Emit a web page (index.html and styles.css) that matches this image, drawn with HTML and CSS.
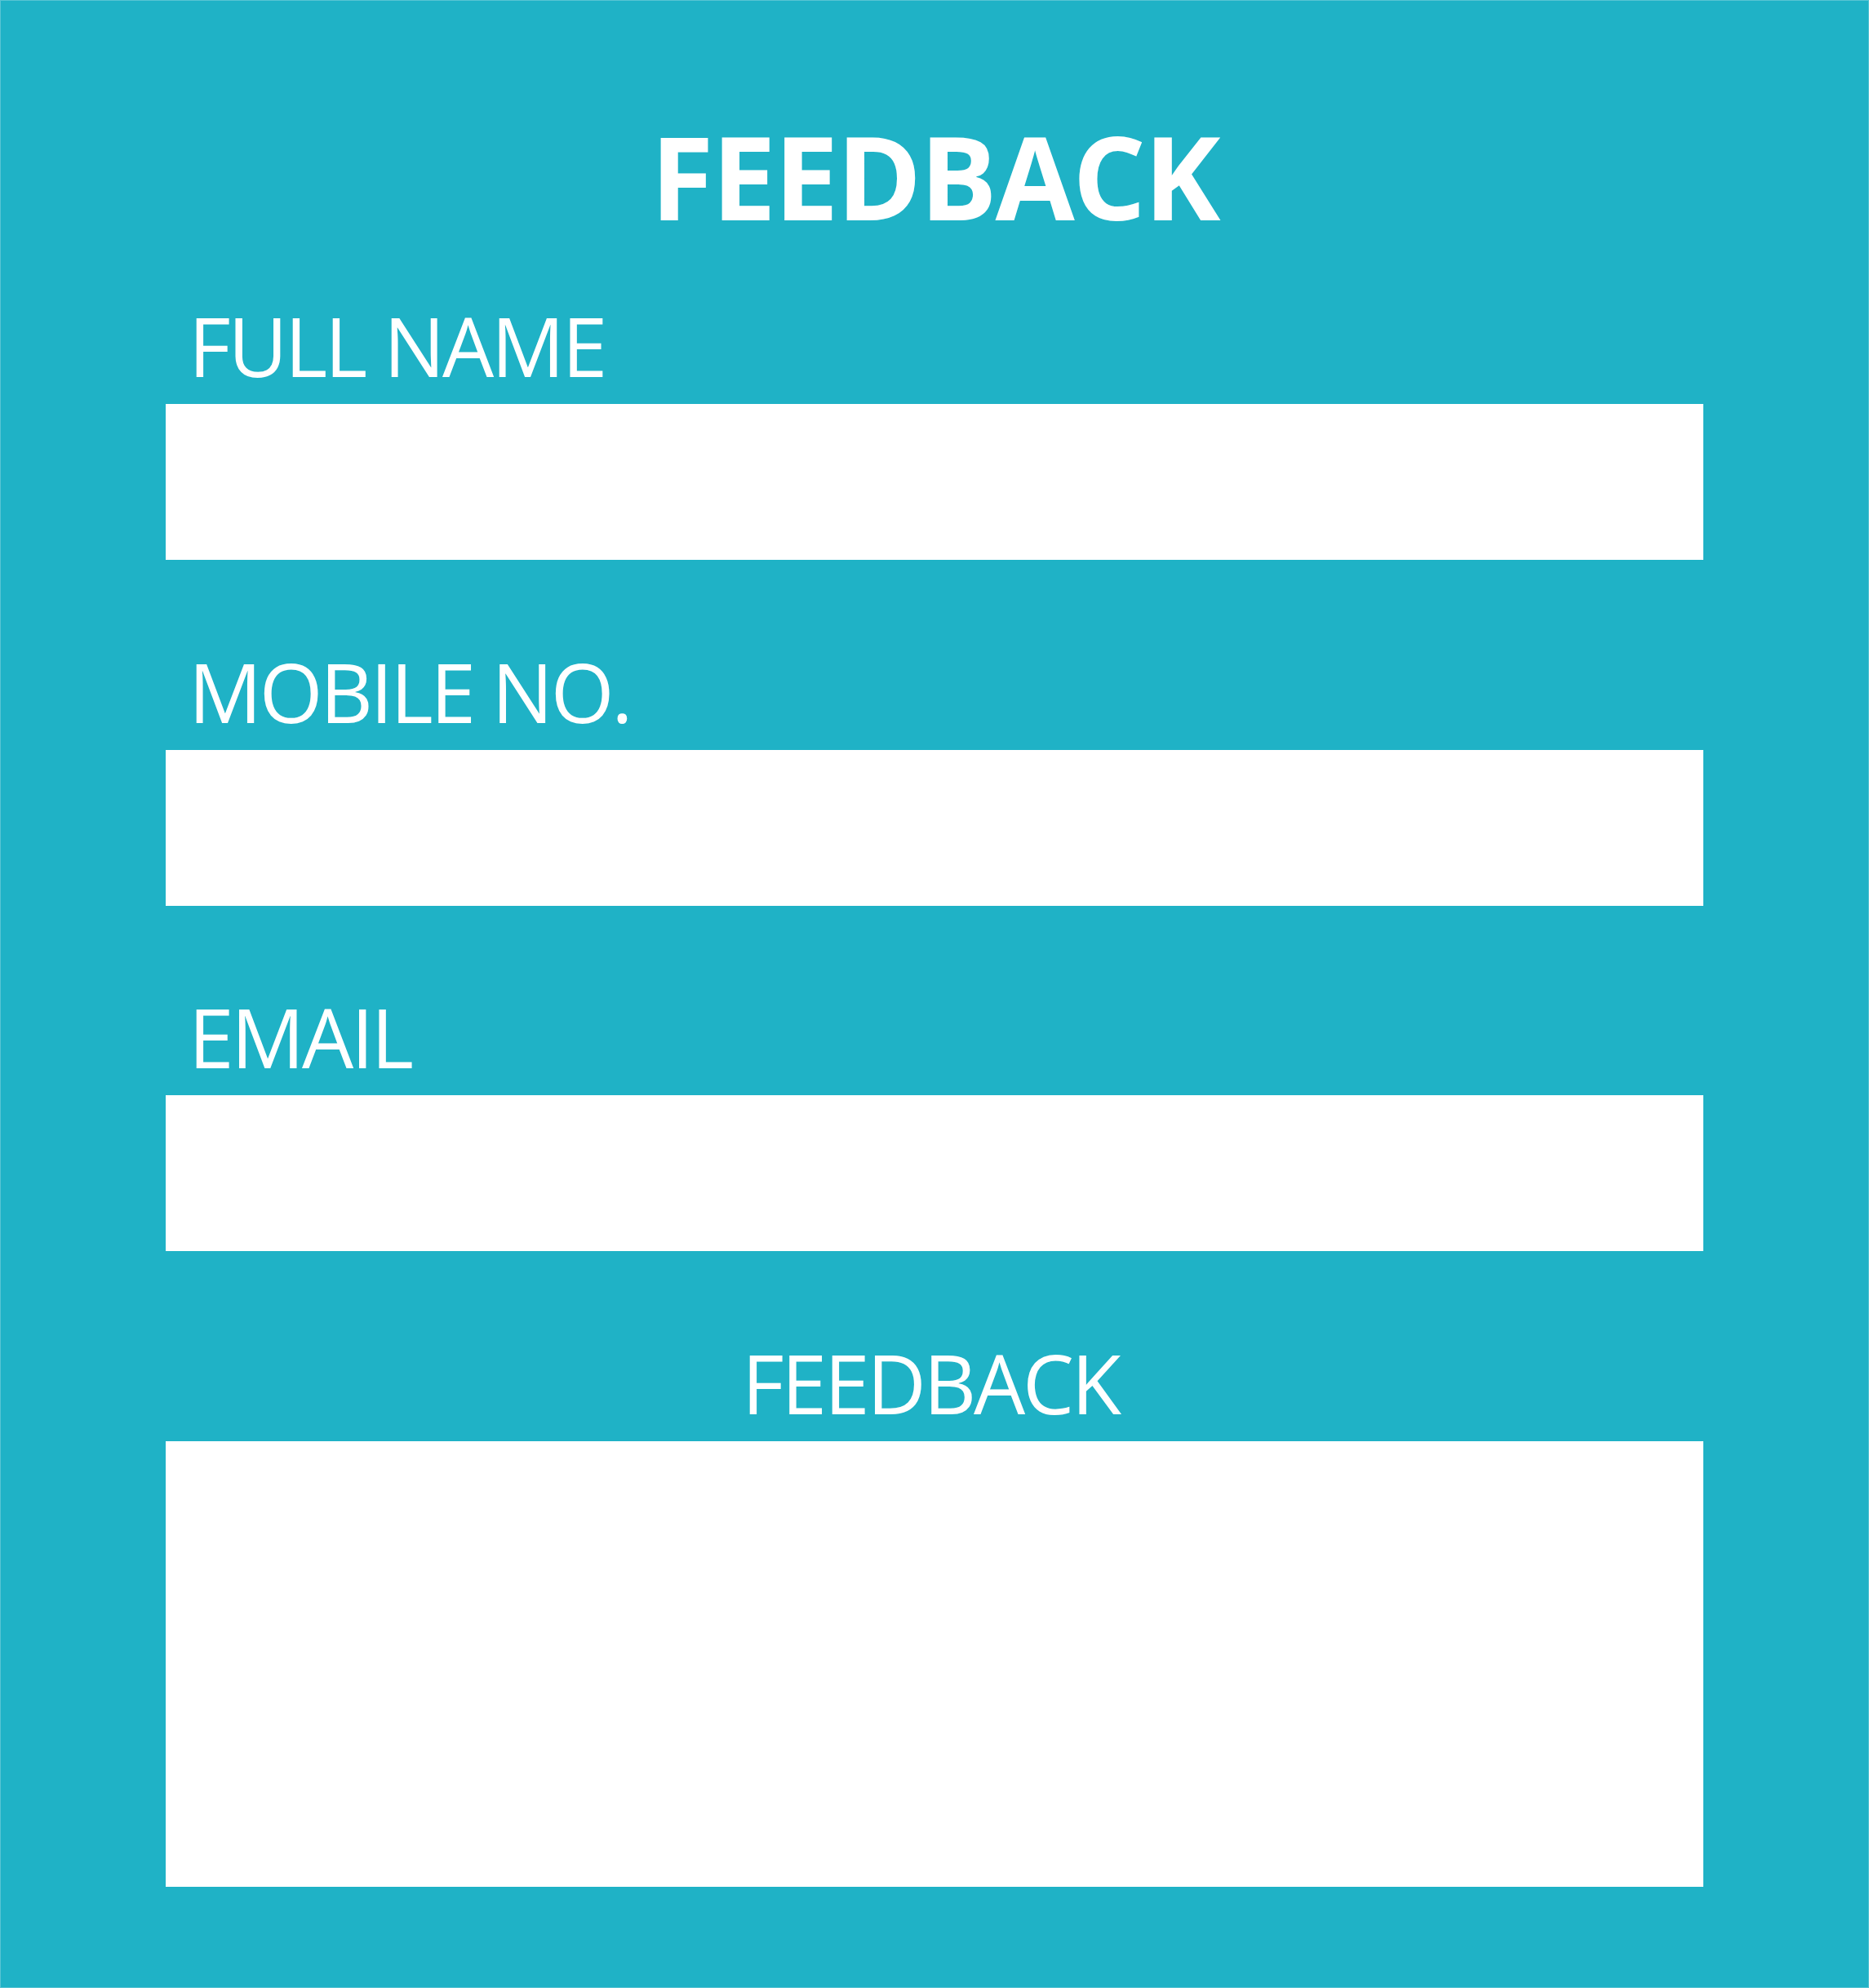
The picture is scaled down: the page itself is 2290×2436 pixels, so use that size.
FILE: index.html
```html
<!DOCTYPE html>
<html lang="en">
<head>
<meta charset="utf-8">
<title>Feedback</title>
<link rel="stylesheet" href="styles.css">
</head>
<body>
<main class="page">
  <h1 class="title">FEEDBACK</h1>
  <form class="form">
    <div class="field">
      <label class="label" for="name">FULL NAME</label>
      <input class="input" id="name" type="text">
    </div>
    <div class="field">
      <label class="label" for="mobile">MOBILE NO.</label>
      <input class="input" id="mobile" type="tel">
    </div>
    <div class="field">
      <label class="label" for="email">EMAIL</label>
      <input class="input" id="email" type="email">
    </div>
    <div class="field field--center">
      <label class="label" for="feedback">FEEDBACK</label>
      <textarea class="input textarea" id="feedback"></textarea>
    </div>
  </form>
</main>
</body>
</html>
```
FILE: styles.css
```css
html, body {
  margin: 0;
  padding: 0;
}
body {
  background: #1fb2c6;
  font-family: "Open Sans", "Noto Sans", sans-serif;
  color: #ffffff;
}
.page {
  box-sizing: border-box;
  width: 2290px;
  height: 2436px;
  border: 1px solid #58c4d3;
  background: #1fb2c6;
  padding: 144px 202px 0;
  display: flex;
  flex-direction: column;
}
.title {
  margin: 0;
  font-size: 141px;
  line-height: 1;
  font-weight: 700;
  letter-spacing: -2.4px;
  text-align: center;
}
.form {
  display: flex;
  flex-direction: column;
  gap: 110.5px;
  margin-top: 87px;
}
.field {
  display: flex;
  flex-direction: column;
  gap: 22px;
}
.label {
  display: block;
  font-size: 100px;
  line-height: 1;
  font-weight: 400;
  letter-spacing: -3.2px;
  padding-left: 28px;
}
.field--center .label {
  text-align: center;
  padding-left: 0;
  padding-right: 10px;
}
.input {
  display: block;
  box-sizing: border-box;
  width: 100%;
  height: 191px;
  margin: 0;
  border: none;
  border-radius: 0;
  background: #ffffff;
  outline: none;
  font: inherit;
  resize: none;
}
.textarea {
  height: 546px;
}
```
